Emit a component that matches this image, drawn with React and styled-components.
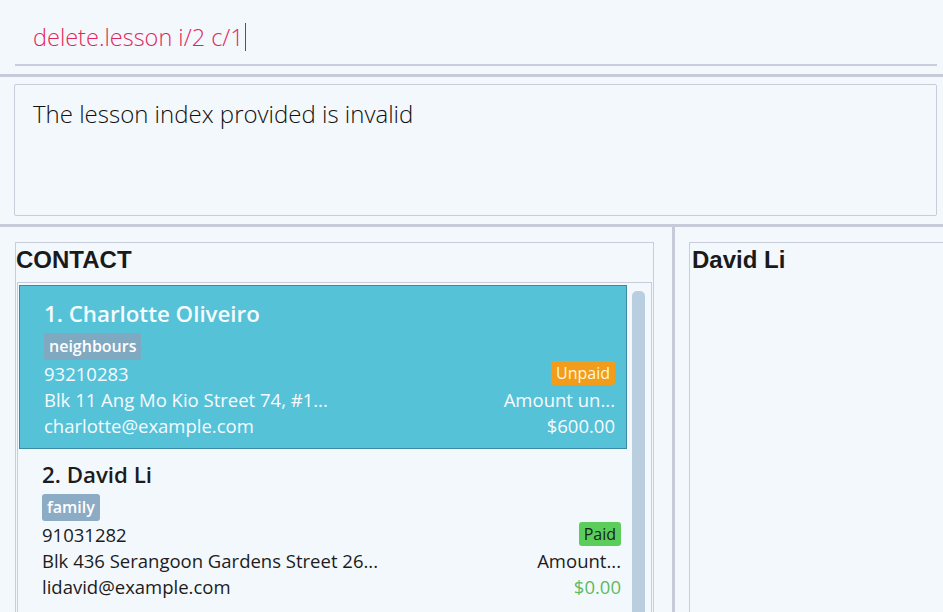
import React from 'react';
import styled, { createGlobalStyle } from 'styled-components';

const GlobalStyle = createGlobalStyle`
  html, body {
    margin: 0;
    padding: 0;
    background: #f3f8fc;
    overflow: hidden;
  }
  body {
    font-family: 'Open Sans', 'Noto Sans', sans-serif;
  }
`;

const Window = styled.div`
  width: 943px;
  height: 612px;
  display: flex;
  flex-direction: column;
  background: #f3f8fc;
  overflow: hidden;
`;

const CommandPane = styled.div`
  height: 74px;
  padding: 0 6px 0 15px;
  box-sizing: border-box;
`;

const CommandInput = styled.div`
  height: 66px;
  box-sizing: border-box;
  padding: 10px 0 0 18px;
  border-bottom: 2px solid #c9ccda;
  font-size: 23.5px;
  font-weight: 300;
  line-height: 30px;
  color: #e2265a;
  display: flex;
  align-items: center;
`;

const Caret = styled.span`
  display: inline-block;
  width: 0;
  height: 28px;
  border-left: 1.5px solid #e8103a;
  margin-left: 1px;
`;

const HDivider = styled.div`
  height: 3px;
  background: #c6cad9;
  flex-shrink: 0;
`;

const ResultPane = styled.div`
  padding: 7px 6px 8px 14px;
`;

const ResultBox = styled.div`
  height: 132px;
  box-sizing: border-box;
  border: 1px solid #c9ccda;
  border-radius: 2px;
  padding: 14px 18px;
  font-size: 24px;
  font-weight: 300;
  line-height: 30px;
  color: #111;
`;

const Bottom = styled.div`
  flex: 1;
  display: flex;
  min-height: 0;
`;

const LeftColumn = styled.div`
  width: 672px;
  box-sizing: border-box;
  padding: 15px 18px 0 15px;
  display: flex;
  flex-direction: column;
`;

const VDivider = styled.div`
  width: 3px;
  background: #c6cad9;
  flex-shrink: 0;
`;

const RightColumn = styled.div`
  flex: 1;
  padding: 15px 0 0 14px;
  display: flex;
  flex-direction: column;
`;

const Panel = styled.div`
  flex: 1;
  border: 1px solid #c9ccda;
  border-bottom: none;
  border-right: ${p => (p.$open ? 'none' : '1px solid #c9ccda')};
  display: flex;
  flex-direction: column;
  min-height: 0;
`;

const PanelTitle = styled.div`
  height: 39px;
  padding-left: ${p => (p.$pad ? '2px' : '0')};
  font-family: 'Liberation Sans', Arial, sans-serif;
  font-weight: bold;
  font-size: 24px;
  line-height: 34px;
  color: #1a1a1a;
  flex-shrink: 0;
`;

const ListArea = styled.div`
  flex: 1;
  margin: 0 1px;
  border: 1px solid #c9ccda;
  border-bottom: none;
  display: flex;
  padding: 2px 6px 0 1px;
  gap: 5px;
  min-height: 0;
  overflow: hidden;
`;

const Cards = styled.div`
  flex: 1;
  display: flex;
  flex-direction: column;
`;

const Scrollbar = styled.div`
  width: 13px;
  margin-top: 6px;
  background: #b9cfe0;
  border-radius: 5px 5px 0 0;
`;

const Card = styled.div`
  box-sizing: border-box;
  height: ${p => (p.$selected ? '165px' : '164px')};
  padding: ${p => (p.$selected ? '15px 11px 0 24px' : '13px 6px 0 23px')};
  background: ${p => (p.$selected ? '#56c2d7' : 'transparent')};
  border: ${p => (p.$selected ? '1px solid #3b8ba2' : 'none')};
  color: ${p => (p.$selected ? '#f5fbff' : '#1c1c1c')};
  font-family: 'Open Sans', 'Noto Sans', sans-serif;
`;

const Name = styled.div`
  font-size: 22.3px;
  font-weight: 600;
  line-height: 26px;
  color: ${p => (p.$selected ? '#f5fbff' : '#1c1c1c')};
`;

const Tag = styled.span`
  display: inline-block;
  margin-top: 6px;
  height: 27px;
  line-height: 27px;
  padding: 0 5px;
  border-radius: 3px;
  font-size: 16px;
  font-weight: 600;
  color: #fff;
  background: ${p => p.$bg};
`;

const Row = styled.div`
  display: flex;
  justify-content: space-between;
  align-items: center;
  height: 26px;
  font-size: 18.5px;
  font-weight: 400;
  white-space: nowrap;
`;

const Badge = styled.span`
  display: inline-block;
  height: 24px;
  line-height: 24px;
  padding: 0 5px;
  border-radius: 3px;
  font-size: 16px;
  font-weight: 400;
  background: ${p => p.$bg};
  color: ${p => p.$fg};
`;

const Amount = styled.span`
  color: ${p => p.$color || 'inherit'};
`;

const contacts = [
  {
    index: 1,
    name: 'Charlotte Oliveiro',
    tag: 'neighbours',
    phone: '93210283',
    address: 'Blk 11 Ang Mo Kio Street 74, #1...',
    email: 'charlotte@example.com',
    paid: false,
    note: 'Amount un...',
    amount: '$600.00',
    selected: true,
  },
  {
    index: 2,
    name: 'David Li',
    tag: 'family',
    phone: '91031282',
    address: 'Blk 436 Serangoon Gardens Street 26...',
    email: 'lidavid@example.com',
    paid: true,
    note: 'Amount...',
    amount: '$0.00',
    selected: false,
  },
];

const ContactCard = ({ c }) => (
  <Card $selected={c.selected}>
    <Name $selected={c.selected}>{c.index}. {c.name}</Name>
    <Tag $bg={c.selected ? '#7fa8c1' : '#8cabc5'}>{c.tag}</Tag>
    <Row>
      <span>{c.phone}</span>
      {c.paid
        ? <Badge $bg="#5bcd5b" $fg="#14261a">Paid</Badge>
        : <Badge $bg="#f19d1b" $fg="#fff5dc">Unpaid</Badge>}
    </Row>
    <Row>
      <span>{c.address}</span>
      <span>{c.note}</span>
    </Row>
    <Row>
      <span>{c.email}</span>
      <Amount $color={c.paid ? '#5dbb63' : undefined}>{c.amount}</Amount>
    </Row>
  </Card>
);

const App = () => (
  <Window>
    <GlobalStyle />
    <CommandPane>
      <CommandInput>
        delete.lesson i/2 c/1<Caret />
      </CommandInput>
    </CommandPane>
    <HDivider />
    <ResultPane>
      <ResultBox>The lesson index provided is invalid</ResultBox>
    </ResultPane>
    <HDivider />
    <Bottom>
      <LeftColumn>
        <Panel>
          <PanelTitle>CONTACT</PanelTitle>
          <ListArea>
            <Cards>
              {contacts.map(c => <ContactCard key={c.index} c={c} />)}
            </Cards>
            <Scrollbar />
          </ListArea>
        </Panel>
      </LeftColumn>
      <VDivider />
      <RightColumn>
        <Panel $open>
          <PanelTitle $pad>David Li</PanelTitle>
        </Panel>
      </RightColumn>
    </Bottom>
  </Window>
);

export default App;
